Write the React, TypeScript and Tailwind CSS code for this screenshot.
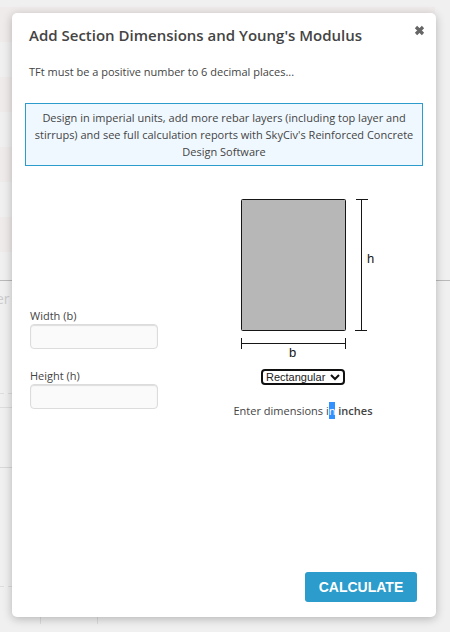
import React from "react";

function PageBehind() {
  return (
    <div aria-hidden="true" className="absolute inset-0 overflow-hidden">
      <div className="mt-[7px] mr-[15px] h-[35px] bg-[#efebea]" />
      <div className="mt-[35px] h-[35px] w-10 bg-[#efebea]" />
      <div className="mt-[35px] h-[35px] w-10 bg-[#efebea]" />
      <div className="mt-[35px] h-[35px] w-10 bg-[#efebea]" />
      <div className="mt-7 h-px bg-[#bababa]" />
      <p className="-ml-1 mt-2 text-sm leading-5 text-[#cccccc]">er</p>
      <div className="mt-[84px] flex gap-1">
        <div className="h-px w-1 bg-[#dddddd]" />
        <div className="h-px w-5 bg-[#dddddd]" />
      </div>
      <div className="mt-[13px] h-px w-5 bg-[#dddddd]" />
      <div className="mt-[59px] h-px w-5 bg-[#d8d8d8]" />
      <div className="mt-[118px] flex gap-1">
        <div className="h-px w-1 bg-[#dddddd]" />
        <div className="h-px w-5 bg-[#dddddd]" />
      </div>
      <div className="ml-10 h-[37px] w-[58px] border-x border-[#dcdcdc]" />
    </div>
  );
}

function SectionDiagram() {
  return (
    <svg width="154" height="162" viewBox="0 0 154 162" role="img" aria-label="Rectangular section">
      <rect x="15.5" y="1.5" width="104" height="131" rx="1" fill="#b7b7b7" stroke="#161616" />
      <g stroke="#161616" fill="none">
        <path d="M130 1.5h12M129 132.5h12M135.5 1v131" />
        <path d="M15.5 140v11M119.5 140v11M15 145.5h105" />
      </g>
      <text x="141" y="65" fontSize="13" fill="#161616">h</text>
      <text x="63" y="159" fontSize="13" fill="#161616">b</text>
    </svg>
  );
}

function Field({ id, label }: { id: string; label: string }) {
  return (
    <div>
      <label htmlFor={id} className="block leading-4">{label}</label>
      <input
        id={id}
        type="text"
        className="block h-[25px] w-32 rounded border border-[#dcdcdc] bg-[#fafafa] px-2 shadow-[inset_0_1px_1px_#dddddd] outline-none"
      />
    </div>
  );
}

export default function App() {
  return (
    <main className="relative flex min-h-screen bg-[#f0f0f0] pt-[13px] pr-3.5 pb-[15px] pl-3 font-['Open_Sans',sans-serif] text-[11px] text-[#444444]">
      <PageBehind />
      <section
        role="dialog"
        aria-labelledby="dialog-title"
        className="relative flex flex-1 flex-col rounded-[5px] bg-white px-[13px] pt-3 pb-[15px] shadow-[0_2px_10px_rgba(0,0,0,0.25)]"
      >
        <header className="flex items-start justify-between pl-1">
          <h1 id="dialog-title" className="text-[15px] leading-5 font-semibold">
            Add Section Dimensions and Young's Modulus
          </h1>
          <button type="button" aria-label="Close" className="-mr-0.5 text-[#666666]">
            <svg width="11" height="11" viewBox="0 0 11 11">
              <path d="M2 2l7 7M9 2l-7 7" stroke="currentColor" strokeWidth="3.2" />
            </svg>
          </button>
        </header>
        <p className="mt-[18px] pl-1 leading-[17px]">TFt must be a positive number to 6 decimal places...</p>
        <p className="mt-[23px] border border-[#2b9ccb] bg-[#f0f8ff] px-2 py-[5px] text-center leading-[17px]">
          Design in imperial units, add more rebar layers (including top layer and stirrups) and see full calculation
          reports with SkyCiv's Reinforced Concrete Design Software
        </p>

        <div className="mt-8 flex justify-between pr-[43px] pl-[5px]">
          <div className="flex flex-col gap-[19px] pt-[110px]">
            <Field id="width" label="Width (b)" />
            <Field id="height" label="Height (h)" />
          </div>
          <div className="flex flex-col items-center font-['Liberation_Sans',Arial,sans-serif]">
            <SectionDiagram />
            <div className="relative mt-[9px] text-[#101010]">
              <select
                aria-label="Section shape"
                className="block h-4 w-[84px] appearance-none rounded-[4px] border-2 border-[#101010] bg-white pl-[3px] text-[11px] leading-3 text-[#202020] outline-none"
              >
                <option>Rectangular</option>
                <option>T-Beam</option>
              </select>
              <svg className="pointer-events-none absolute top-[5px] right-[5px]" width="10" height="7" viewBox="0 0 10 7">
                <path d="M1 1l4 4 4-4" fill="none" stroke="currentColor" strokeWidth="2" />
              </svg>
            </div>
            <p className="mt-[18px] font-['Open_Sans',sans-serif] leading-4">
              Enter dimensions <span>i<mark className="bg-[#3390ff] py-px text-white">n</mark></span>{" "}
              <b className="font-semibold">inches</b>
            </p>
          </div>
        </div>

        <button
          type="button"
          className="mt-auto mr-1.5 h-[30px] w-28 self-end rounded-[3px] bg-[#2b9ccb] font-['Liberation_Sans',Arial,sans-serif] text-sm font-bold text-white"
        >
          CALCULATE
        </button>
      </section>
    </main>
  );
}
